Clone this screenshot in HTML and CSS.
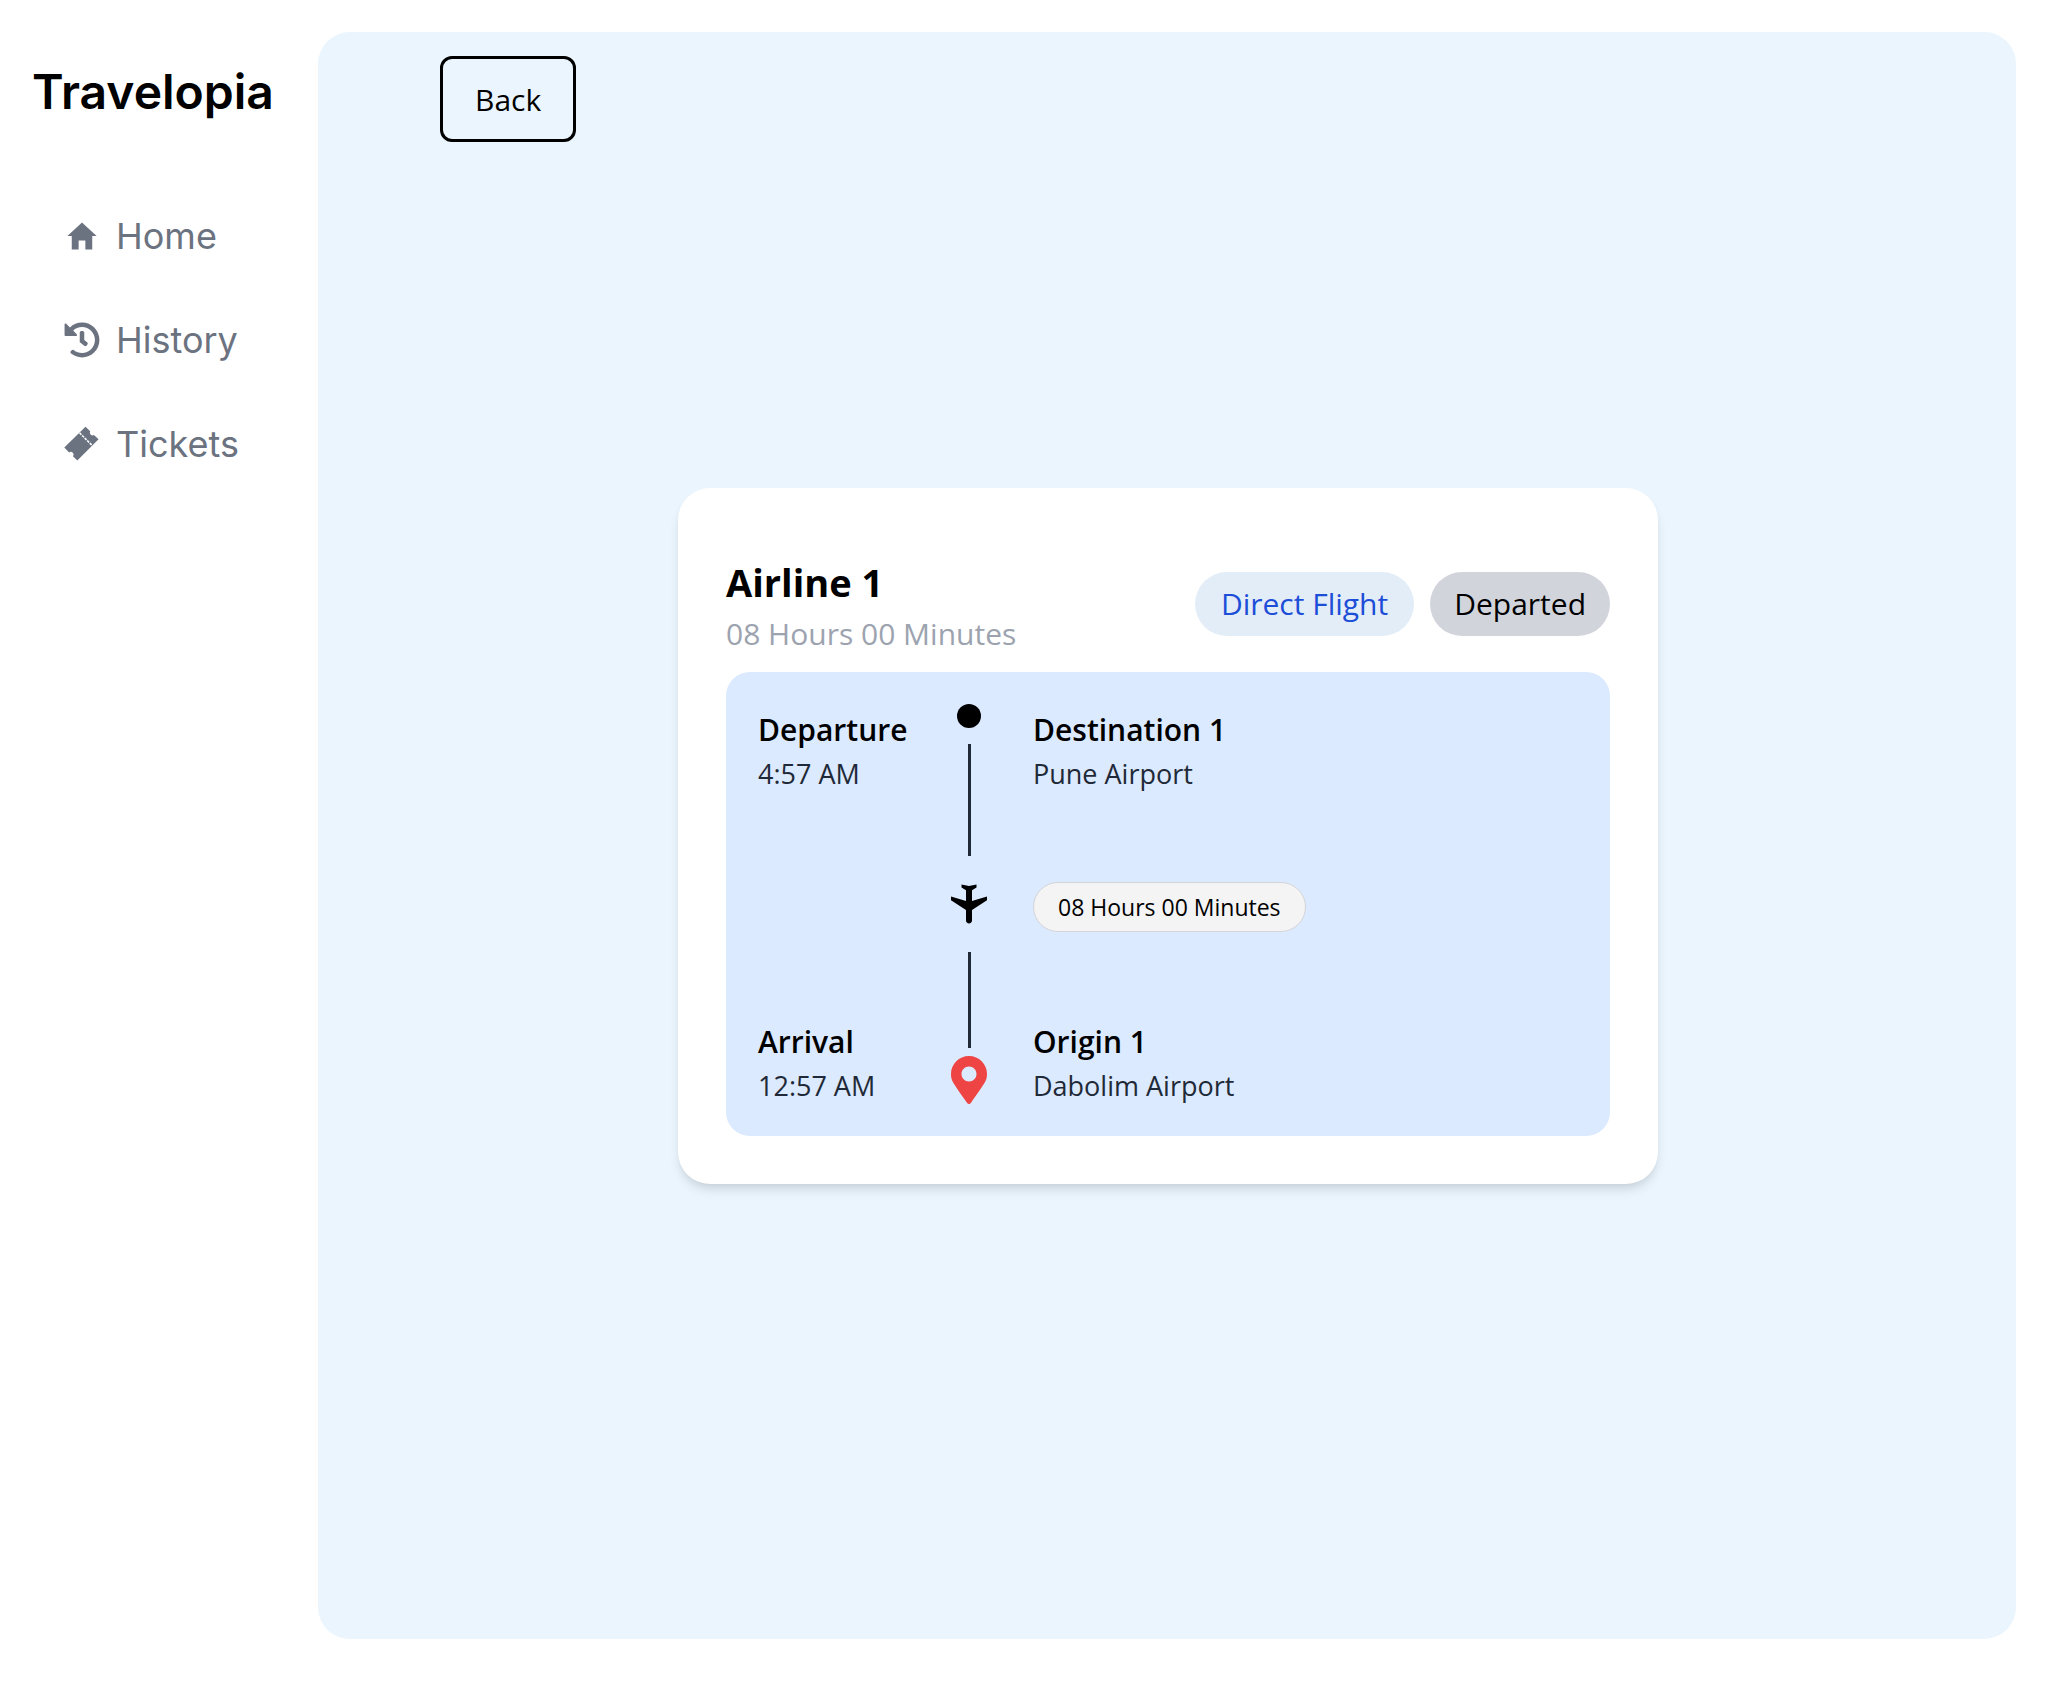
FILE: index.html
```html
<!DOCTYPE html>
<html lang="en">
<head>
<meta charset="utf-8">
<meta name="viewport" content="width=device-width, initial-scale=1">
<title>Travelopia</title>
<link rel="stylesheet" href="styles.css">
</head>
<body>
<div class="layout">
  <aside class="sidebar">
    <h1 class="brand">Travelopia</h1>
    <nav class="menu" aria-label="Main">
      <a class="menu-link" href="#home">
        <svg class="menu-icon" viewBox="0 0 512 512" aria-hidden="true"><path d="M208 448V320h96v128h97.6V256H464L256 64 48 256h62.4v192z"/></svg>
        Home
      </a>
      <a class="menu-link" href="#history">
        <svg class="menu-icon" viewBox="0 0 512 512" aria-hidden="true"><path d="M504 255.531c.253 136.64-111.18 248.372-247.82 248.468-59.015.042-113.223-20.53-155.822-54.911-11.077-8.94-11.905-25.541-1.839-35.607l11.267-11.267c8.609-8.609 22.353-9.551 31.891-1.984C173.062 425.135 212.781 440 256 440c101.705 0 184-82.311 184-184 0-101.705-82.311-184-184-184-48.814 0-93.149 18.969-126.068 49.932l50.754 50.754c10.08 10.08 2.941 27.314-11.313 27.314H24c-8.837 0-16-7.163-16-16V38.627c0-14.254 17.234-21.393 27.314-11.314l49.372 49.372C129.209 34.136 189.552 8 256 8c136.81 0 247.747 110.78 248 247.531zm-180.912 78.784l9.823-12.63c8.138-10.463 6.253-25.542-4.21-33.679L288 256.349V152c0-13.255-10.745-24-24-24h-16c-13.255 0-24 10.745-24 24v135.651l65.409 50.874c10.463 8.137 25.541 6.253 33.679-4.21z"/></svg>
        History
      </a>
      <a class="menu-link" href="#tickets">
        <svg class="menu-icon" viewBox="0 0 36 36" aria-hidden="true"><path d="M21.500.7 26.200 5.300A2.700 2.700 0 0 0 29.900 9L34.600 13.200 13.300 34.600 9 30.300A2.700 2.700 0 0 0 5.200 26.500L.3 21.500z"/><path class="perforation" d="M15.600 6.900 28 19.300"/></svg>
        Tickets
      </a>
    </nav>
  </aside>

  <main class="content">
    <button class="back" type="button">Back</button>
    <article class="ticket">
      <header class="ticket-head">
        <div>
          <h2 class="airline">Airline 1</h2>
          <p class="duration">08 Hours 00 Minutes</p>
        </div>
        <div class="badges">
          <span class="badge badge-direct">Direct Flight</span>
          <span class="badge badge-status">Departed</span>
        </div>
      </header>
      <section class="route">
        <div class="times">
          <div>
            <h3 class="stop-title">Departure</h3>
            <p class="stop-text">4:57 AM</p>
          </div>
          <div>
            <h3 class="stop-title">Arrival</h3>
            <p class="stop-text">12:57 AM</p>
          </div>
        </div>
        <div class="track" aria-hidden="true">
          <span class="dot"></span>
          <span class="line line-first"></span>
          <svg class="plane" viewBox="0 0 512 512"><path transform="rotate(180 256 256)" d="M448 336v-40L288 192V79.200c0-17.700-14.800-31.200-32-31.200s-32 13.500-32 31.200V192L64 296v40l160-48v113.600l-48 31.200V464l80-16 80 16v-31.200l-48-31.200V288l160 48z"/></svg>
          <span class="line line-last"></span>
          <svg class="pin" viewBox="0 0 384 512"><path d="M172.268 501.67C26.97 291.031 0 269.413 0 192 0 85.961 85.961 0 192 0s192 85.961 192 192c0 77.413-26.97 99.031-172.268 309.67-9.535 13.774-29.93 13.773-39.464 0zM192 272c44.183 0 80-35.817 80-80s-35.817-80-80-80-80 35.817-80 80 35.817 80 80 80z"/></svg>
        </div>
        <div class="places">
          <div>
            <h3 class="stop-title">Destination 1</h3>
            <p class="stop-text">Pune Airport</p>
          </div>
          <span class="flight-time">08 Hours 00 Minutes</span>
          <div>
            <h3 class="stop-title">Origin 1</h3>
            <p class="stop-text">Dabolim Airport</p>
          </div>
        </div>
      </section>
    </article>
  </main>
</div>
</body>
</html>
```
FILE: styles.css
```css
* {
  box-sizing: border-box;
}

body,
h1,
h2,
h3,
p {
  margin: 0;
}

body {
  background: #fff;
  color: #000;
  font-family: "Segoe UI", "Open Sans", "Noto Sans", sans-serif;
}

.layout {
  display: flex;
  min-height: 100vh;
  padding: 32px 32px 51px 0;
}

.sidebar {
  flex: none;
  width: 318px;
  padding: 24px 32px;
  font-family: Inter, sans-serif;
}

.brand {
  font-size: 48px;
  font-weight: 600;
  line-height: 72px;
}

.menu {
  display: flex;
  flex-direction: column;
  gap: 48px;
  padding: 80px 32px;
}

.menu-link {
  display: flex;
  align-items: center;
  gap: 16px;
  color: #6b7280;
  font-size: 36px;
  line-height: 56px;
  text-decoration: none;
}

.menu-icon {
  flex: none;
  width: 36px;
  height: 36px;
  fill: currentColor;
}

.perforation {
  fill: none;
  stroke: #fff;
  stroke-width: 1.6;
  stroke-dasharray: 2.6 1;
}

.content {
  flex: 1;
  display: grid;
  grid-template-rows: 1fr auto 1fr;
  padding: 24px 32px 24px 34px;
  background: #eaf5fe;
  border-radius: 32px;
}

.back {
  align-self: start;
  justify-self: start;
  margin-left: 88px;
  padding: 17px 32px 15px;
  background: transparent;
  border: 3px solid #000;
  border-radius: 12px;
  color: #000;
  font-family: inherit;
  font-size: 30px;
  line-height: 48px;
}

.ticket {
  justify-self: center;
  width: 980px;
  max-width: 100%;
  padding: 64px 48px 48px;
  background: #fff;
  border-radius: 32px;
  box-shadow: 0 8px 12px -2px rgba(0, 0, 0, 0.1), 0 4px 8px -4px rgba(0, 0, 0, 0.1);
}

.ticket-head {
  display: flex;
  align-items: center;
  justify-content: space-between;
  margin-bottom: 16px;
}

.airline {
  font-size: 38px;
  font-weight: 700;
  line-height: 60px;
}

.duration {
  color: #9ca3af;
  font-size: 30px;
  line-height: 44px;
}

.badges {
  display: flex;
  gap: 16px;
}

.badge {
  padding: 8px 24px;
  border-radius: 32px;
  font-size: 30px;
  line-height: 48px;
}

.badge-direct {
  padding: 8px 26px;
  background: #e3edf7;
  color: #1d4ed8;
}

.badge-status {
  background: #d1d5db;
}

.route {
  display: flex;
  padding: 32px;
  background: #dbeafe;
  border-radius: 24px;
}

.times,
.places {
  display: flex;
  flex-direction: column;
  align-items: flex-start;
  justify-content: space-between;
}

.times {
  width: 193px;
}

.stop-title {
  font-size: 30px;
  font-weight: 600;
  line-height: 52px;
}

.stop-text {
  color: #1f2937;
  font-size: 27px;
  line-height: 36px;
}

.track {
  display: flex;
  flex-direction: column;
  align-items: center;
  width: 36px;
  margin-right: 46px;
}

.dot {
  width: 24px;
  height: 24px;
  border-radius: 50%;
  background: #000;
}

.line {
  width: 3px;
  background: #1f2937;
}

.line-first {
  height: 112px;
  margin-top: 16px;
}

.plane {
  flex: none;
  width: 48px;
  height: 48px;
  margin: 24px 0;
}

.line-last {
  height: 96px;
  margin-bottom: 8px;
}

.pin {
  width: 36px;
  height: 48px;
  fill: #ef4444;
}

.flight-time {
  margin-top: 6px;
  padding: 8px 24px;
  background: #f4f4f5;
  border: 1px solid #d4d4d8;
  border-radius: 32px;
  font-size: 23px;
  line-height: 32px;
}
```
